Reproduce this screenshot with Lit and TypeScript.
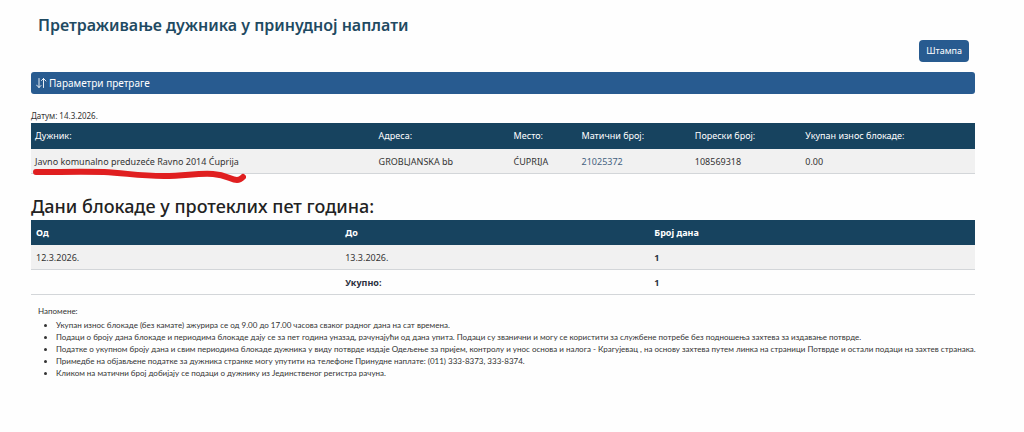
import { LitElement, html, css } from "lit";
import { customElement } from "lit/decorators.js";

const NOTES = [
  "Укупан износ блокаде (без камате) ажурира се од 9.00 до 17.00 часова сваког радног дана на сат времена.",
  "Подаци о броју дана блокаде и периодима блокаде дају се за пет година уназад, рачунајући од дана упита. Подаци су званични и могу се користити за службене потребе без подношења захтева за издавање потврде.",
  "Податке о укупном броју дана и свим периодима блокаде дужника у виду потврде издаје Одељење за пријем, контролу и унос основа и налога - Крагујевац , на основу захтева путем линка на страници Потврде и остали подаци на захтев странака.",
  "Примедбе на објављене податке за дужника странке могу упутити на телефоне Принудне наплате: (011) 333-8373, 333-8374.",
  "Кликом на матични број добијају се подаци о дужнику из Јединственог регистра рачуна.",
];

@customElement("app-root")
export class AppRoot extends LitElement {
  static styles = css`
    :host {
      display: block;
      background: #fefefe;
      color: #333;
      min-height: 100vh;
      font: 9px/14px "Noto Sans", "Open Sans", sans-serif;
    }
    main {
      padding: 13px 49px 20px 31px;
    }
    h1 {
      margin: 0;
      padding-left: 7px;
      font-size: 16px;
      line-height: 24px;
      font-weight: 600;
      color: #1f4a62;
    }
    .actions {
      display: flex;
      justify-content: flex-end;
      padding: 3px 6px 10px;
    }
    button {
      font: inherit;
      color: #fff;
      background: #285b90;
      border: 0;
      cursor: pointer;
    }
    .print {
      padding: 4px 7px;
      border-radius: 4px;
    }
    .params {
      display: flex;
      align-items: center;
      gap: 2px;
      width: 100%;
      padding: 4px 5px;
      border-radius: 3px;
      font-size: 10px;
    }
    .params svg {
      width: 11px;
      height: 10px;
    }
    .date {
      margin: 15px 0 0;
      font-size: 8px;
    }
    table {
      width: 100%;
      border-collapse: collapse;
      table-layout: fixed;
    }
    th,
    td {
      text-align: left;
      padding: 6px 4px;
      overflow-wrap: break-word;
    }
    th {
      background: #17435f;
      color: #fff;
      font-weight: 400;
    }
    td {
      padding-bottom: 4px;
      border-bottom: 1px solid #d3d6d9;
    }
    .striped td {
      background: #f1f1f1;
    }
    .c-name {
      width: 36.4%;
    }
    .c-address {
      width: 14.3%;
    }
    .c-place {
      width: 7.2%;
    }
    .c-id {
      width: 12%;
    }
    .c-tax {
      width: 11.7%;
    }
    .c-third {
      width: 32.75%;
    }
    .days th {
      padding: 6px 5px 5px;
    }
    .days td {
      padding-left: 5px;
    }
    .days th,
    .days .strong {
      font-weight: 700;
    }
    .days .strong {
      color: #2b3040;
    }
    a {
      color: #44617f;
      text-decoration: none;
    }
    .marked {
      position: relative;
    }
    .marker {
      position: absolute;
      left: 1px;
      top: 18px;
      width: 214px;
      height: 16px;
      pointer-events: none;
      z-index: 1;
    }
    h2 {
      margin: 19px 0 0;
      padding-bottom: 1px;
      font-size: 18px;
      line-height: 26px;
      font-weight: 500;
      color: #222;
    }
    .notes {
      margin-right: -31px;
      padding: 10px 0 0 7px;
      font: 8px/12px Lato, "Noto Sans", sans-serif;
    }
    .notes p {
      margin: 0 0 2px;
    }
    .notes ul {
      margin: 0;
      padding-left: 18px;
    }
  `;

  render() {
    return html`
      <main>
        <h1>Претраживање дужника у принудној наплати</h1>
        <div class="actions"><button class="print" type="button">Штампа</button></div>
        <button class="params" type="button">
          <svg viewBox="0 0 11 10" fill="none" stroke="#fff" stroke-width="0.9" stroke-linecap="round" stroke-linejoin="round" aria-hidden="true">
            <path d="M3 0.500v9M0.500 7 3 9.500 5 7.500M7.500 9.500v-9M5.500 2.500 7.500 0.500 10 3" />
          </svg>
          Параметри претраге
        </button>

        <p class="date">Датум: 14.3.2026.</p>
        <table class="debtor">
          <colgroup>
            <col class="c-name" /><col class="c-address" /><col class="c-place" />
            <col class="c-id" /><col class="c-tax" /><col />
          </colgroup>
          <thead>
            <tr>
              <th>Дужник:</th><th>Адреса:</th><th>Место:</th>
              <th>Матични број:</th><th>Порески број:</th><th>Укупан износ блокаде:</th>
            </tr>
          </thead>
          <tbody>
            <tr class="striped">
              <td class="marked">
                Javno komunalno preduzeće Ravno 2014 Ćuprija
                <svg class="marker" viewBox="0 0 214 16" fill="none" stroke="#e01f20" stroke-width="6" stroke-linecap="round" stroke-linejoin="round" aria-hidden="true">
                  <path d="M4 5C28 5 50 4.500 72 5C94 6 106 9 132 9C154 9 164 6 181 7C195 8 199 13 205 13C208 13 210 11 211 10" />
                </svg>
              </td>
              <td>GROBLJANSKA bb</td>
              <td>ĆUPRIJA</td>
              <td><a href="#21025372">21025372</a></td>
              <td>108569318</td>
              <td>0.00</td>
            </tr>
          </tbody>
        </table>

        <h2>Дани блокаде у протеклих пет година:</h2>
        <table class="days">
          <colgroup><col class="c-third" /><col class="c-third" /><col /></colgroup>
          <thead>
            <tr><th>Од</th><th>До</th><th>Број дана</th></tr>
          </thead>
          <tbody>
            <tr class="striped"><td>12.3.2026.</td><td>13.3.2026.</td><td class="strong">1</td></tr>
            <tr><td></td><td class="strong">Укупно:</td><td class="strong">1</td></tr>
          </tbody>
        </table>

        <section class="notes">
          <p>Напомене:</p>
          <ul>
            ${NOTES.map((note) => html`<li>${note}</li>`)}
          </ul>
        </section>
      </main>
    `;
  }
}
